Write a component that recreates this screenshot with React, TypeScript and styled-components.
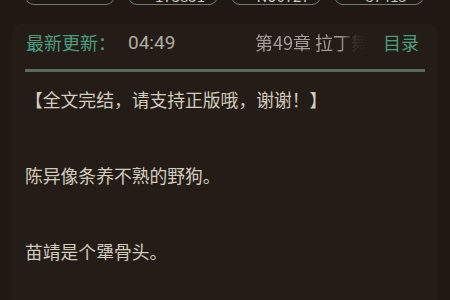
import React from 'react'
import styled, { createGlobalStyle } from 'styled-components'

const Global = createGlobalStyle`
  html, body {
    margin: 0;
    padding: 0;
    background: #1f1813;
    overflow: hidden;
  }
  body {
    font-family: 'Noto Sans CJK SC', 'Noto Sans', sans-serif;
  }
`

const stats = ['', '173831', 'No6727', '87415']

const paragraphs = [
  '【全文完结，请支持正版哦，谢谢！】',
  '',
  '陈异像条养不熟的野狗。',
  '',
  '苗靖是个犟骨头。',
]

const App: React.FC = () => {
  return (
    <Page>
      <Global />
      <StatRow>
        {stats.map((s, i) => (
          <Stat key={i}>{s}</Stat>
        ))}
      </StatRow>
      <Card>
        <Header>
          <Label>最新更新：</Label>
          <Time>04:49</Time>
          <Chapter>第49章 拉丁舞</Chapter>
          <Catalog>目录</Catalog>
        </Header>
        <Rule />
        <Body>
          {paragraphs.map((p, i) => (
            <Para key={i}>{p || '\u00a0'}</Para>
          ))}
        </Body>
      </Card>
    </Page>
  )
}

export default App

const Page = styled.div`
  width: 450px;
  height: 300px;
  overflow: hidden;
  display: flex;
  flex-direction: column;
`

const StatRow = styled.div`
  display: flex;
  gap: 13px;
  padding: 0 25px;
  margin-top: -25px;
`

const Stat = styled.div`
  width: 90px;
  height: 30px;
  box-sizing: border-box;
  border: 1.5px solid #6d7c6c;
  border-radius: 9px;
  color: #cfc9bd;
  font-size: 15px;
  line-height: 40px;
  text-align: center;
  overflow: hidden;
  padding-left: 14px;
`

const Card = styled.div`
  margin: 19px 12px 0;
  flex: 1;
  background: #241c16;
  border-radius: 10px 10px 0 0;
  padding: 0 13px;
  display: flex;
  flex-direction: column;
`

const Header = styled.div`
  display: flex;
  align-items: center;
  height: 36px;
  margin-bottom: 9px;
  padding: 0 1px;
  font-size: 18px;
`

const Label = styled.span`
  color: #4e9c7e;
  width: 102px;
`

const Time = styled.span`
  color: #b0aba3;
  font-family: 'Roboto', 'Noto Sans', sans-serif;
  font-size: 19px;
  width: 127px;
`

const Chapter = styled.span`
  color: #a29d95;
  width: 112px;
  white-space: nowrap;
  overflow: hidden;
  -webkit-mask-image: linear-gradient(to right, #000 76%, rgba(0, 0, 0, 0.2) 86%, transparent 100%);
  mask-image: linear-gradient(to right, #000 76%, rgba(0, 0, 0, 0.2) 86%, transparent 100%);
`

const Catalog = styled.span`
  color: #4e9c7e;
  margin-left: auto;
  padding-right: 5px;
`

const Rule = styled.div`
  height: 2.5px;
  background: #5a6a5a;
`

const Body = styled.div`
  padding-top: 8px;
  display: flex;
  flex-direction: column;
`

const Para = styled.p`
  margin: 0;
  color: #d2cbbf;
  font-size: 17.8px;
  line-height: 38px;
`
